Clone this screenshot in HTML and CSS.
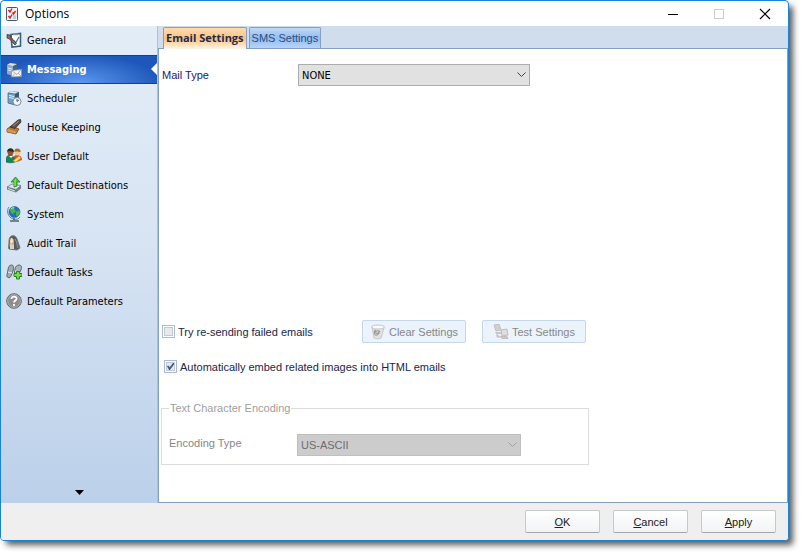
FILE: index.html
```html
<!DOCTYPE html>
<html lang="en">
<head>
  <meta charset="UTF-8">
  <title>Options</title>
  <meta name="viewport" content="width=device-width, initial-scale=1">
  <link rel="stylesheet" href="styles.css">
</head>
<body>
  <div class="window">
    <header class="titlebar">
      <svg class="app-icon" width="12" height="14" viewBox="0 0 12 14">
        <rect x=".5" y=".5" width="11" height="13" rx="1" fill="#eef3f8" stroke="#3d5873"/>
        <path d="M2.5 3l1.5 2 2-3.500M2.500 9l1.500 2 2-3.500M6.500 5.500l1 1.500 2-3" fill="none" stroke="#d9261c" stroke-width="1.500"/>
        <path d="M7 9h3M7 11h3" stroke="#9aa9b8"/>
      </svg>
      <h1>Options</h1>
      <button class="win-btn" aria-label="Minimize"><svg width="12" height="12" viewBox="0 0 12 12"><path d="M1 6.500h10" stroke="#000"/></svg></button>
      <button class="win-btn" aria-label="Maximize" disabled><svg width="12" height="12" viewBox="0 0 12 12"><rect x="1.500" y="1.500" width="9" height="9" fill="none" stroke="#ccc"/></svg></button>
      <button class="win-btn" aria-label="Close"><svg width="12" height="12" viewBox="0 0 12 12"><path d="M1 1l10 10M11 1L1 11" stroke="#000" stroke-width="1.200"/></svg></button>
    </header>

    <div class="content">
      <nav class="sidebar">
        <a href="#">
          <svg class="icon" viewBox="0 0 16 16"><path d="M5 2.500l9.500-1v12.500l-8.500 1z" fill="#fff" stroke="#35617e" stroke-width="1.600"/><path d="M7 1.200h5v2H7z" fill="#7895a8"/><path d="M7.500 8l2 3 3.500-6" fill="none" stroke="#52748c" stroke-width="1.300"/><path d="M1 2.500l3 .5 1 2.500 5.500 6-1.500 1.500-5.500-6L1 6z" fill="#6d757c" stroke="#2c3035" stroke-width=".7"/><path d="M3 6.500L5 5l2 2-1.500 1.800z" fill="#d62f22"/></svg>
          General
        </a>
        <a href="#" class="selected">
          <svg class="icon" viewBox="0 0 16 16"><path d="M1 3l3-2 7 1v11l-3 1-7-2z" fill="#45627d"/><path d="M1 3l6 1v10l-6-2z" fill="#8eacc5"/><path d="M1 3l3-2 7 1-4 2z" fill="#d6e1ea"/><path d="M2 6l4 1M2 8l4 1" stroke="#dfecf5"/><path d="M5.500 8.500l10-1v7l-10 .5z" fill="#f4f4f1" stroke="#8c969f" stroke-width=".8"/><path d="M6 9l5 3.500L15 8M6 15l3-3.500M15 14l-3-3" fill="none" stroke="#9ca5ad" stroke-width=".8"/></svg>
          Messaging
        </a>
        <a href="#">
          <svg class="icon" viewBox="0 0 16 16"><path d="M2 3l3-2 8 1v11l-4 2-7-2z" fill="#385a78"/><path d="M2 3l7 1v11l-7-2z" fill="#6fa0ca"/><path d="M2 3l3-2 8 1-4 2z" fill="#d8e6f0"/><path d="M2 3l7 1 4-2M2 3v10l7 2" fill="none" stroke="#4a6478" stroke-width=".7"/><path d="M3 5.500l5 1M3 7.500l5 1" stroke="#e2f2fd"/><circle cx="11" cy="11.500" r="4" fill="#f2f5f8" stroke="#7c8995"/><path d="M11 9v2.500l2-1.500" fill="none" stroke="#4a5660"/></svg>
          Scheduler
        </a>
        <a href="#">
          <svg class="icon" viewBox="0 0 16 16"><path d="M1 10l4-3 8 3-3 5-9-2z" fill="#b97835" stroke="#76471b" stroke-width=".8"/><path d="M1.500 10l8 2.500v2l-8-1.700z" fill="#e5b26a"/><path d="M3 11v2M5 11.500v2M7 12v2" stroke="#a3682f" stroke-width=".7"/><path d="M4 8l8-7 2.500-.5L15 3l-6 6.500z" fill="#5c5148" stroke="#302b27" stroke-width=".8"/><path d="M7 7l6-5" stroke="#9f9489"/></svg>
          House Keeping
        </a>
        <a href="#">
          <svg class="icon" viewBox="0 0 16 16"><path d="M7 13c0-5 2-6 4-6s5 1 5 5l-5 2z" fill="#db4d36"/><circle cx="11.500" cy="4.500" r="3" fill="#efc78e"/><path d="M8.500 4c-1-5 7-4 6 0-2 0-3-1-6 0" fill="#a36b24"/><path d="M0 14c0-5 1-7 4-7s5 3 5 7c-3 1-6 1-9 0" fill="#16855a" stroke="#0b573b" stroke-width=".6"/><circle cx="4.500" cy="4.500" r="3" fill="#895532"/><path d="M1 4c0-5 7-5 7 0C6 4 3 2 1 4" fill="#292520"/><path d="M3 8l2 2 2-2z" fill="#fff"/><path d="M7 13l6-5 2 2-5 4z" fill="#ffe069" stroke="#c69428" stroke-width=".7"/></svg>
          User Default
        </a>
        <a href="#">
          <svg class="icon" viewBox="0 0 16 16"><path d="M1 10l5-3 9 1.500v3l-5 4-9-3z" fill="#727d83"/><path d="M1 10l5-3 9 1.500-5 4z" fill="#dce3e7" stroke="#6a777e" stroke-width=".7"/><path d="M2 11.500l7 2.500" stroke="#dce4e9"/><path d="M8 10V5H5l4.500-5L14 5h-3v4z" fill="#49c33d" stroke="#218023" stroke-width=".8"/><path d="M9 9V4.500l.5-2" fill="none" stroke="#a6f08b"/></svg>
          Default Destinations
        </a>
        <a href="#">
          <svg class="icon" viewBox="0 0 16 16"><path d="M3 1C0 5 2 11 7 13c3 1 6 0 7-2" fill="none" stroke="#667f8b"/><path d="M8 12v2M4 15h9" stroke="#486474" stroke-width="1.500"/><circle cx="8.500" cy="6" r="5.500" fill="#2070c8" stroke="#165da3" stroke-width=".6"/><path d="M4 4c0-2 3-3.500 5-3l-1 2 2 2-2 2-2 1-1-2zM10 6l3-2 1 3-3 4-1-2z" fill="#4db441"/><path d="M5 3q2-2 3-1" stroke="#b5f2ba" fill="none"/></svg>
          System
        </a>
        <a href="#">
          <svg class="icon" viewBox="0 0 16 16"><path d="M5.500 1c4-1 5.500 2 6.500 6l2 6-3 2-8-1c-1-1 0-4 0-7 0-3 .5-5 2.500-6" fill="#55595b" stroke="#6d7274"/><path d="M5 3c2 0 3 1 3 4v6H4c-1-3 0-8 1-10" fill="#c0ae84"/><path d="M5 3c2 0 2 2 2 4L5 9 4 6z" fill="#ffe2ad"/><path d="M9 4c2 3 2 6 3 9" fill="none" stroke="#9b9fa0"/><path d="M4 9l4 1v4H4z" fill="#d7d3c8"/></svg>
          Audit Trail
        </a>
        <a href="#">
          <svg class="icon" viewBox="0 0 16 16"><path d="M2 6c0-3 1.500-5 3.500-5C8 1 8 4 7 7l-2 5c-1 3-5 1.500-4-1z" fill="#9eabb1" stroke="#596970"/><path d="M9 5c.5-2.500 2-4 4-4 3 0 3 3 1.500 6L12 11c-2 2-4 0-3.500-2z" fill="#a8b4ba" stroke="#596970"/><path d="M2 8l4 1M9 7l4 1" stroke="#edf3f4"/><path d="M10.500 7.500h3v2H16v3h-2.500V15h-3v-2.500H8v-3h2.500z" fill="#74dc50" stroke="#24821c"/></svg>
          Default Tasks
        </a>
        <a href="#">
          <svg class="icon" viewBox="0 0 16 16"><circle cx="8" cy="8" r="7.300" fill="#8a8c8e" stroke="#646769"/><circle cx="8" cy="8" r="6.300" fill="none" stroke="#bfc1c2" stroke-width=".7"/><path d="M5.500 6c0-3.500 5.500-3 5 0-.3 1.500-2.500 1.500-2.500 3.500M8 11v2" fill="none" stroke="#fff" stroke-width="1.800"/></svg>
          Default Parameters
        </a>
        <button class="more" aria-label="More options"><svg width="9" height="5" viewBox="0 0 9 5"><path d="M0 0h9L4.500 5z"/></svg></button>
      </nav>

      <main class="pane">
        <div class="tabs" role="tablist">
          <button class="tab active" role="tab" aria-selected="true">Email Settings</button>
          <button class="tab" role="tab" aria-selected="false">SMS Settings</button>
        </div>

        <form class="settings">
          <div class="field mail-type">
            <label for="mailType">Mail Type</label>
            <div class="select">
              <select id="mailType"><option>NONE</option></select>
              <svg class="arrow" width="9" height="6" viewBox="0 0 9 6"><path d="M.5 .5l4 4 4-4"/></svg>
            </div>
          </div>

          <div class="resend">
            <label class="check"><input type="checkbox">Try re-sending failed emails</label>
            <button type="button" class="tool" disabled>
              <svg class="icon" viewBox="0 0 16 16"><path d="M2 3l2 11c2 1 6 1 7 0l3-10z" fill="#e2e2e2" stroke="#c8c8c8"/><ellipse cx="8" cy="3" rx="6.500" ry="2" fill="#fafafa" stroke="#c6c6c6"/><path d="M6 6c-3 1-2 6 1 5s3-5 0-4-1 3 1 2l2-2" fill="none" stroke="#9c9c9c" stroke-width="1.200"/></svg>
              Clear Settings
            </button>
            <button type="button" class="tool" disabled>
              <svg class="icon" viewBox="0 0 16 16"><path d="M1 1l5-1 2 6-5 1z" fill="#d0d0d0" stroke="#c0c0c0"/><path d="M2 8h6v2H3z" fill="#c7c7c7"/><path d="M8 6l6-1 1 6-6 1z" fill="#dedede" stroke="#bdbdbd"/><path d="M8 12.500h6l1 2H9zM4 10v3h4" fill="#cdcdcd" stroke="#bebebe"/></svg>
              Test Settings
            </button>
          </div>

          <label class="check embed"><input type="checkbox" checked>Automatically embed related images into HTML emails</label>

          <fieldset class="encoding" disabled>
            <legend>Text Character Encoding</legend>
            <div class="field">
              <label for="encodingType">Encoding Type</label>
              <div class="select">
                <select id="encodingType"><option>US-ASCII</option></select>
                <svg class="arrow" width="9" height="6" viewBox="0 0 9 6"><path d="M.5 .5l4 4 4-4"/></svg>
              </div>
            </div>
          </fieldset>
        </form>
      </main>
    </div>

    <footer class="footer">
      <button><u>O</u>K</button>
      <button><u>C</u>ancel</button>
      <button><u>A</u>pply</button>
    </footer>
  </div>
</body>
</html>
```
FILE: styles.css
```css
* {
  box-sizing: border-box;
}
body {
  margin: 0;
  height: 100vh;
  padding: 0 15px 15px 0;
  background: #fff;
  color: #17264a;
  font-family: "Liberation Sans", Arial, sans-serif;
  font-size: 11px;
  overflow: hidden;
}
button, select, input {
  margin: 0;
  font: inherit;
}
.window {
  display: flex;
  flex-direction: column;
  height: 100%;
  background: #fff;
  border: 1px solid #1883d7;
  border-radius: 4px;
  box-shadow: 5px 5px 6px -1px rgba(0, 0, 0, 0.65);
  overflow: hidden;
}

/* title bar */
.titlebar {
  display: flex;
  align-items: center;
  height: 25px;
  padding-left: 5px;
  color: #000;
}
.titlebar h1 {
  flex: 1;
  margin: 0 0 0 7px;
  font: 12px "Open Sans", sans-serif;
}
.win-btn {
  display: flex;
  align-items: center;
  justify-content: center;
  width: 46px;
  height: 25px;
  padding: 0;
  border: 0;
  background: none;
}

.content {
  display: flex;
  flex: 1;
  min-height: 0;
}
.icon {
  flex: none;
  width: 16px;
  height: 16px;
}

/* sidebar */
.sidebar {
  display: flex;
  flex-direction: column;
  width: 157px;
  background: linear-gradient(#e3edf7, #d7e4f3 45%, #bbd0ea);
  border-right: 1px solid #b3c1cf;
}
.sidebar a {
  position: relative;
  display: flex;
  align-items: center;
  gap: 5px;
  height: 29px;
  padding: 0 0 1px 5px;
  color: #000;
  font-family: "DejaVu Sans Condensed", "Open Sans", sans-serif;
  text-decoration: none;
}
.sidebar .selected {
  padding-bottom: 0;
  color: #fff;
  font-weight: bold;
  background: radial-gradient(ellipse at 50% 100%, #5c99f0, #1d57b9 75%);
  border-top: 1px solid #0c419c;
  border-bottom: 1px solid #0c419c;
}
.sidebar .selected::after {
  content: "";
  position: absolute;
  right: 0;
  top: 7px;
  border: 6px solid transparent;
  border-left: 0;
  border-right-color: #fff;
}
.more {
  display: flex;
  justify-content: center;
  margin-top: auto;
  padding: 8px;
  border: 0;
  background: none;
}

/* tabs */
.pane {
  display: flex;
  flex: 1;
  flex-direction: column;
}
.tabs {
  display: flex;
  align-items: flex-end;
  gap: 2px;
  height: 23px;
  padding-left: 5px;
  background: #cfdded;
  border-bottom: 1px solid #849fc2;
}
.tab {
  height: 21px;
  padding: 0 2px;
  border: 1px solid #849fc2;
  border-bottom: 0;
  border-radius: 2px 2px 0 0;
  background: linear-gradient(#c2d9f5, #94bcf0 50%, #b5d4fa);
  color: #2c4d84;
}
.tab.active {
  height: 22px;
  margin-bottom: -1px;
  padding: 0 2px 2px;
  background: linear-gradient(#ffdcae, #fbc283 50%, #fff5e7);
  color: #1c2b48;
  font-family: "Open Sans", sans-serif;
  font-weight: bold;
}

/* settings form */
.settings {
  flex: 1;
  padding: 15px 3px 0;
  border-left: 1px solid #849fc2;
  border-right: 1px solid #849fc2;
  border-bottom: 1px solid #849fc2;
}
.field {
  display: flex;
  align-items: center;
}
.field label {
  width: 136px;
  color: #17177c;
}
.select {
  display: grid;
  align-items: center;
  width: 232px;
}
.select select {
  grid-area: 1 / 1;
  height: 22px;
  padding: 0 3px;
  appearance: none;
  border: 1px solid #adadad;
  border-radius: 0;
  background: #e1e1e1;
  color: #000;
  font-family: "DejaVu Sans Condensed", "Open Sans", sans-serif;
}
.arrow {
  grid-area: 1 / 1;
  justify-self: end;
  margin-right: 4px;
  fill: none;
  stroke: #444;
  pointer-events: none;
}
.check {
  display: flex;
  align-items: center;
  gap: 3px;
}
.check input {
  position: relative;
  width: 13px;
  height: 13px;
  appearance: none;
  border: 1px solid #a6bcda;
  background: #e9e9e9;
  box-shadow: inset 0 0 0 1px #fff, inset 0 0 0 2px #c3c9cf;
}
.check input:checked::after {
  content: "";
  position: absolute;
  inset: 2px;
  background: #375c94;
  clip-path: polygon(0 45%, 20% 35%, 38% 60%, 85% 0, 100% 0, 100% 20%, 42% 100%, 30% 100%);
}
.resend {
  display: flex;
  align-items: center;
  margin-top: 234px;
}
.resend .check {
  width: 200px;
}
.tool {
  display: flex;
  align-items: center;
  justify-content: center;
  gap: 3px;
  width: 104px;
  height: 23px;
  margin-right: 16px;
  padding: 0;
  border: 1px solid #c5d7ec;
  border-radius: 2px;
  background: #ebf4fd;
  color: #878787;
}
.embed {
  margin: 17px 0 0 2px;
}
.encoding {
  width: 428px;
  margin: 29px 0 0 -1px;
  padding: 20px 7px 8px;
  border: 1px solid #dcdcdc;
}
.encoding legend {
  padding: 0 1px;
  color: #a0a0a0;
}
.encoding .field {
  align-items: flex-start;
}
.encoding .field label {
  width: 128px;
  padding-top: 3px;
  color: #878787;
}
.encoding .select {
  width: 224px;
}
.encoding select {
  border-color: #bfbfbf;
  background: #ccc;
  color: #6d6d6d;
  font-family: inherit;
  opacity: 1;
}
.encoding .arrow {
  stroke: #a0a0a0;
}

/* footer */
.footer {
  display: flex;
  justify-content: flex-end;
  gap: 13px;
  padding: 7px 12px;
  background: #efefef;
}
.footer button {
  width: 75px;
  height: 23px;
  padding: 0;
  border: 1px solid #c6c8ca;
  border-bottom-color: #a4a6a8;
  border-radius: 2px;
  background: linear-gradient(#fff, #f1f3f6);
  color: #222;
}
```
